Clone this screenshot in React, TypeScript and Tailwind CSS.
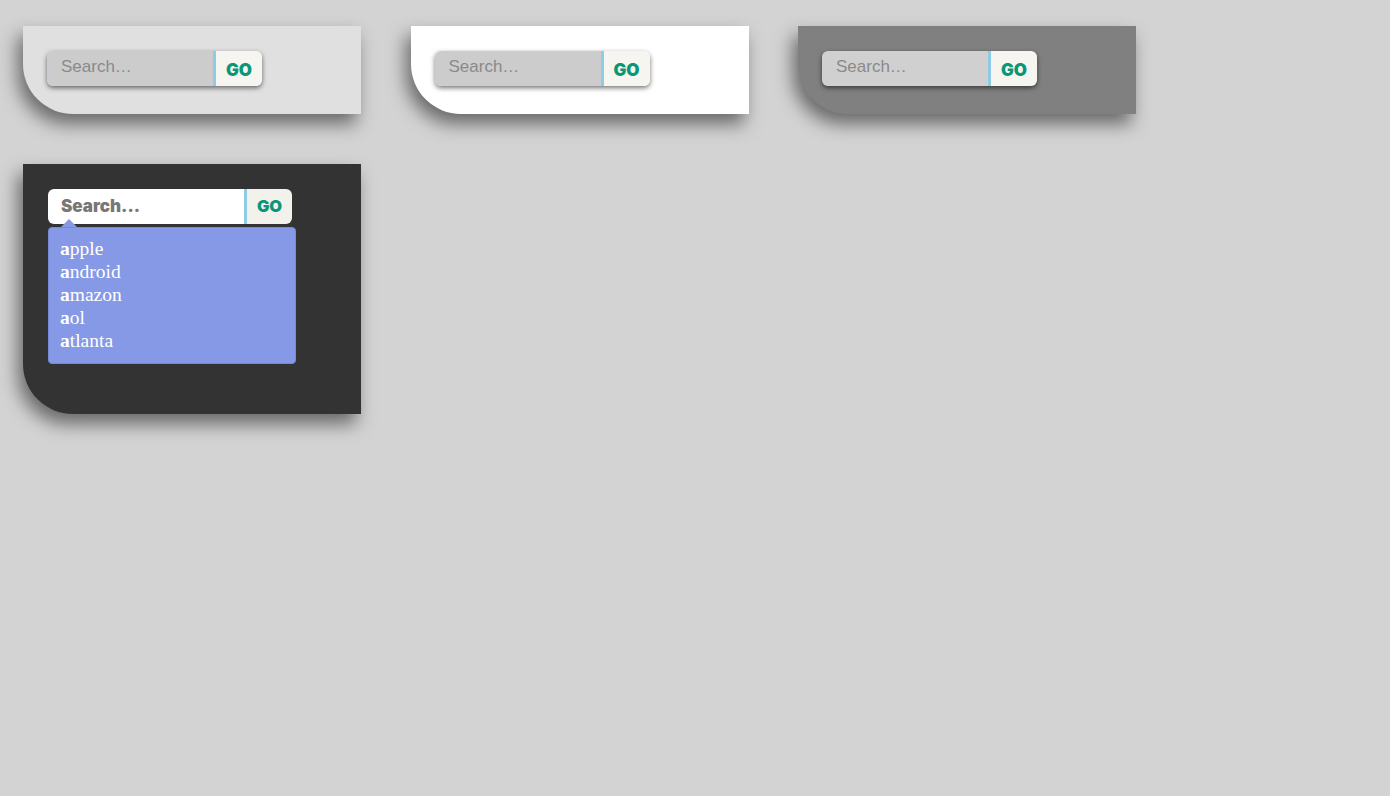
import React from "react";

function SearchBox({ bg }: { bg: string }) {
  return (
    <div className="flex h-[35px] w-[215px] overflow-hidden rounded-[6px] shadow-[0_2px_5px_rgba(0,0,0,0.55)]">
      <div className={`flex w-[166px] items-start pl-[14px] pt-[3px] ${bg}`}>
        <span className="text-[17px] text-[#8a8a8a] [font-family:'Liberation_Sans',Arial,sans-serif]">Search…</span>
      </div>
      <div className="w-[3px] bg-[#8ecbe4]" />
      <div className="flex flex-1 items-center justify-center bg-[#f6f5f0] pt-[3px]">
        <span className="text-[17px] font-black leading-none text-[#0b9677] [font-family:Inter,sans-serif]">GO</span>
      </div>
    </div>
  );
}

function Panel({ color, children, tall }: { color: string; children: React.ReactNode; tall?: boolean }) {
  return (
    <div
      className={`w-[338px] ${tall ? "h-[250px]" : "h-[88px]"} rounded-bl-[50px] px-[24px] pt-[25px] ${color} shadow-[-5px_10px_18px_rgba(0,0,0,0.5)]`}
    >
      {children}
    </div>
  );
}

const items = ["pple", "ndroid", "mazon", "ol", "tlanta"];

export default function App() {
  return (
    <div className="min-h-[796px] w-full bg-[#d3d3d3] pl-[23px] pt-[26px]">
      <div className="flex flex-wrap items-start gap-x-[49.5px] gap-y-[50px]">
        <Panel color="bg-[#e0e0e0]">
          <SearchBox bg="bg-[#cccccc]" />
        </Panel>
        <Panel color="bg-white">
          <SearchBox bg="bg-[#cccccc]" />
        </Panel>
        <Panel color="bg-[#808080]">
          <SearchBox bg="bg-[#d0d0d0]" />
        </Panel>
        <Panel color="bg-[#333333]" tall>
          <div className="relative w-[248px] pl-[1px]">
            <div className="flex h-[35px] w-[244px] overflow-hidden rounded-[6px]">
              <div className="flex w-[196px] items-center bg-white pl-[13px]">
                <span className="text-[17px] font-black text-[#777777] [font-family:Inter,sans-serif]">Search...</span>
              </div>
              <div className="w-[3px] bg-[#8ecbe4]" />
              <div className="flex flex-1 items-center justify-center bg-[#f3f1ec]">
                <span className="text-[16.5px] font-black leading-none text-[#0b9677] [font-family:Inter,sans-serif]">GO</span>
              </div>
            </div>
            <div className="absolute left-[14px] top-[30px] h-0 w-0 border-x-[8px] border-b-[8px] border-x-transparent border-b-[#8599e6]" />
            <div className="mt-[3px] h-[137px] w-[248px] rounded-[4px] border border-[#7589d6] bg-[#8599e6] pl-[11px] pt-[9px] text-[19.5px] leading-[23px] text-white [font-family:'Liberation_Serif','Times_New_Roman',serif]">
              {items.map((t) => (
                <div key={t}>
                  <b>a</b>
                  {t}
                </div>
              ))}
            </div>
          </div>
        </Panel>
      </div>
    </div>
  );
}
